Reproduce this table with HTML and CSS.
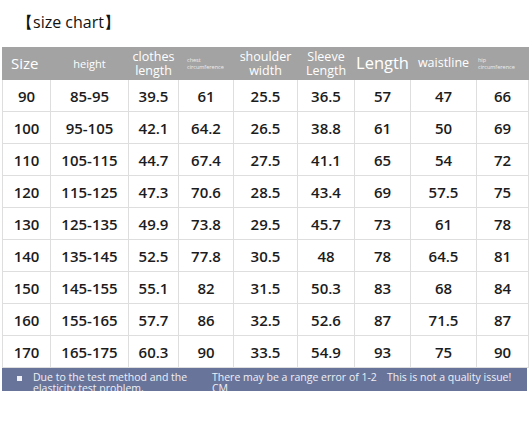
FILE: index.html
```html
<!DOCTYPE html>
<html>
<head>
    <title>Size Chart</title>
    <link rel="stylesheet" href="styles.css">
</head>
<body>
    <h2 class="title">【size chart】</h2>
    <table class="chart">
        <colgroup>
            <col class="c1"><col class="c2"><col class="c3"><col class="c4"><col class="c5">
            <col class="c6"><col class="c7"><col class="c8"><col class="c9">
        </colgroup>
        <tr class="head">
            <th class="big"><span class="left">Size</span></th>
            <th class="small">height</th>
            <th class="mid">clothes<br>length</th>
            <th class="tiny"><span class="left">chest<br>circumference</span></th>
            <th class="mid">shoulder<br>width</th>
            <th class="mid">Sleeve<br>Length</th>
            <th class="huge">Length</th>
            <th class="small2">waistline</th>
            <th class="tiny"><span class="left hip">hip<br>circumference</span></th>
        </tr>
        <tr><td>90</td><td>85-95</td><td>39.5</td><td>61</td><td>25.5</td><td>36.5</td><td>57</td><td>47</td><td>66</td></tr>
        <tr><td>100</td><td>95-105</td><td>42.1</td><td>64.2</td><td>26.5</td><td>38.8</td><td>61</td><td>50</td><td>69</td></tr>
        <tr><td>110</td><td>105-115</td><td>44.7</td><td>67.4</td><td>27.5</td><td>41.1</td><td>65</td><td>54</td><td>72</td></tr>
        <tr><td>120</td><td>115-125</td><td>47.3</td><td>70.6</td><td>28.5</td><td>43.4</td><td>69</td><td>57.5</td><td>75</td></tr>
        <tr><td>130</td><td>125-135</td><td>49.9</td><td>73.8</td><td>29.5</td><td>45.7</td><td>73</td><td>61</td><td>78</td></tr>
        <tr><td>140</td><td>135-145</td><td>52.5</td><td>77.8</td><td>30.5</td><td>48</td><td>78</td><td>64.5</td><td>81</td></tr>
        <tr><td>150</td><td>145-155</td><td>55.1</td><td>82</td><td>31.5</td><td>50.3</td><td>83</td><td>68</td><td>84</td></tr>
        <tr><td>160</td><td>155-165</td><td>57.7</td><td>86</td><td>32.5</td><td>52.6</td><td>87</td><td>71.5</td><td>87</td></tr>
        <tr><td>170</td><td>165-175</td><td>60.3</td><td>90</td><td>33.5</td><td>54.9</td><td>93</td><td>75</td><td>90</td></tr>
    </table>
    <div class="note">
        <span class="dot"></span>
        <span class="n1">Due to the test method and the elasticity test problem,</span>
        <span class="n2">There may be a range error of 1-2 CM</span>
        <span class="n3">This is not a quality issue!</span>
    </div>
</body>
</html>
```

FILE: styles.css
```css
body {
    margin: 0;
    padding: 0;
    background: #fff;
    font-family: "Open Sans", "DejaVu Sans", sans-serif;
    color: #1c1c1c;
}

.title {
    margin: 0;
    height: 47px;
    padding-left: 17px;
    font-size: 16px;
    font-weight: normal;
    line-height: 45px;
    color: #111;
}

.chart {
    margin-left: 2px;
    width: 526px;
    border-collapse: collapse;
    table-layout: fixed;
}

.c1 { width: 48px; }
.c2 { width: 78px; }
.c3 { width: 50px; }
.c4 { width: 55px; }
.c5 { width: 64px; }
.c6 { width: 57px; }
.c7 { width: 56px; }
.c8 { width: 66px; }
.c9 { width: 52px; }

.chart td,
.chart th {
    border: 1px solid #dedede;
    padding: 0;
    text-align: center;
    overflow: hidden;
    white-space: nowrap;
}

.chart td {
    height: 31px;
    font-size: 15px;
    font-weight: 600;
}

.head th {
    height: 31px;
    background: #a3a3a3;
    color: #fff;
    font-weight: normal;
    line-height: 1;
    border-color: #a3a3a3;
}

.head .left {
    display: block;
    text-align: left;
    padding-left: 8px;
}

.head .hip {
    padding-left: 1px;
}

.head .big { font-size: 15px; }
.head .small { font-size: 11px; }
.head .small2 { font-size: 12.5px; }
.head .mid { font-size: 12.5px; line-height: 14px; }
.head .huge { font-size: 16.5px; }
.head .tiny { font-size: 5.5px; line-height: 7px; color: #eee; }

.note {
    margin-left: 2px;
    width: 525px;
    height: 23px;
    background: #69749a;
    color: #eef0f6;
    font-size: 10.5px;
    line-height: 11px;
    display: flex;
    overflow: hidden;
    padding-top: 4px;
    box-sizing: border-box;
}

.dot {
    width: 5px;
    height: 5px;
    background: #eef0f6;
    margin: 4px 11px 0 15px;
    flex: none;
}

.n1 { width: 160px; margin-right: 19px; flex: none; }
.n2 { width: 172px; margin-right: 3px; flex: none; }
.n3 { flex: 1; }
```
